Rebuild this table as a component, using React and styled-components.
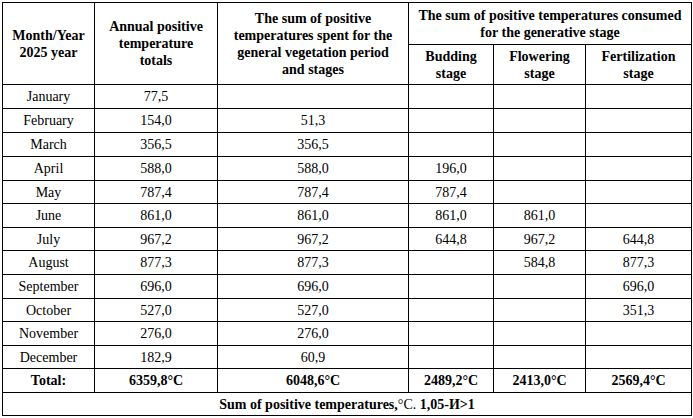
import React from "react";
import styled, { createGlobalStyle } from "styled-components";

const Global = createGlobalStyle`
  html, body { margin: 0; padding: 0; background: #fff; }
  body { font-family: "Liberation Serif", "Times New Roman", serif; color: #000; }
`;

const Page = styled.div`
  padding: 2px 0 0 2px;
`;

const Table = styled.table`
  border-collapse: collapse;
  table-layout: fixed;
  width: 689px;
  font-family: "Liberation Serif", "Times New Roman", serif;
  font-size: 14px;
  color: #000;
`;

const Th = styled.th`
  border: 1px solid #000;
  font-weight: bold;
  text-align: center;
  vertical-align: middle;
  line-height: 17px;
  padding: 0 8px;
`;

const Td = styled.td`
  border: 1px solid #000;
  text-align: center;
  vertical-align: middle;
  padding: 0 7px;
  line-height: 15px;
  font-weight: ${(p) => (p.$bold ? "bold" : "normal")};
`;

const Row = styled.tr`
  height: ${(p) => p.$h}px;
`;

const Light = styled.span`
  font-weight: normal;
`;

const rows = [
  ["January", "77,5", "", "", "", ""],
  ["February", "154,0", "51,3", "", "", ""],
  ["March", "356,5", "356,5", "", "", ""],
  ["April", "588,0", "588,0", "196,0", "", ""],
  ["May", "787,4", "787,4", "787,4", "", ""],
  ["June", "861,0", "861,0", "861,0", "861,0", ""],
  ["July", "967,2", "967,2", "644,8", "967,2", "644,8"],
  ["August", "877,3", "877,3", "", "584,8", "877,3"],
  ["September", "696,0", "696,0", "", "", "696,0"],
  ["October", "527,0", "527,0", "", "", "351,3"],
  ["November", "276,0", "276,0", "", "", ""],
  ["December", "182,9", "60,9", "", "", ""],
];

const heights = [24, 24, 24, 24, 23, 24, 23, 24, 24, 23, 24, 23];

export default function App() {
  return (
    <>
      <Global />
      <Page>
        <Table>
          <colgroup>
            <col style={{ width: 92 }} />
            <col style={{ width: 123 }} />
            <col style={{ width: 191 }} />
            <col style={{ width: 85 }} />
            <col style={{ width: 92 }} />
            <col style={{ width: 106 }} />
          </colgroup>
          <thead>
            <Row $h={42}>
              <Th rowSpan={2}>Month/Year 2025 year</Th>
              <Th rowSpan={2}>Annual positive temperature totals</Th>
              <Th rowSpan={2}>
                The sum of positive temperatures spent for the general vegetation period and stages
              </Th>
              <Th colSpan={3}>
                The sum of positive temperatures consumed for the generative stage
              </Th>
            </Row>
            <Row $h={40}>
              <Th>Budding stage</Th>
              <Th>Flowering stage</Th>
              <Th>Fertilization stage</Th>
            </Row>
          </thead>
          <tbody>
            {rows.map((r, i) => (
              <Row key={r[0]} $h={heights[i]}>
                {r.map((c, j) => (
                  <Td key={j}>{c}</Td>
                ))}
              </Row>
            ))}
            <Row $h={24}>
              <Td $bold>Total:</Td>
              <Td $bold>6359,8°C</Td>
              <Td $bold>6048,6°C</Td>
              <Td $bold>2489,2°C</Td>
              <Td $bold>2413,0°C</Td>
              <Td $bold>2569,4°C</Td>
            </Row>
            <Row $h={23}>
              <Td $bold colSpan={6}>
                Sum of positive temperatures,<Light>°C.</Light> 1,05-И&gt;1
              </Td>
            </Row>
          </tbody>
        </Table>
      </Page>
    </>
  );
}
